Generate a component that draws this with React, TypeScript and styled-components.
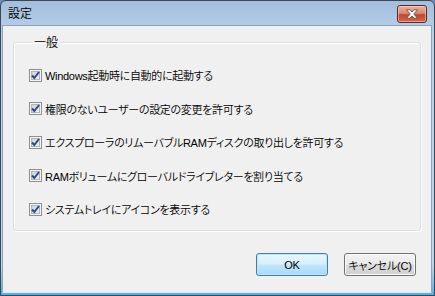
import React from 'react';
import styled, { createGlobalStyle } from 'styled-components';

const GlobalStyle = createGlobalStyle`
	html, body {
		margin: 0;
		padding: 0;
		overflow: hidden;
		background: #6d8fb5;
	}
	body {
		font-family: "Liberation Sans", "Noto Sans CJK JP", sans-serif;
	}
`;

const Window = styled.div`
	width: 435px;
	height: 296px;
	box-sizing: border-box;
	display: flex;
	flex-direction: column;
	border: 1px solid #3b4756;
	border-radius: 6px 6px 0 0;
	background: linear-gradient(to bottom, #a3bfdc 0%, #b9d1ea 12%, #bcd4ec 90%, #4bb4e4 100%);
	padding: 0 2px 2px 1px;
	overflow: hidden;
`;

const TitleBar = styled.div`
	height: 24px;
	flex: 0 0 24px;
	display: flex;
	align-items: center;
	justify-content: space-between;
	padding: 0 5px 0 6px;
`;

const Title = styled.span`
	font-family: "Noto Sans CJK JP", sans-serif;
	font-size: 12px;
	font-weight: 350;
	color: #000;
	line-height: 14px;
`;

const CloseButton = styled.div`
	width: 30px;
	height: 18px;
	box-sizing: border-box;
	border: 1px solid #5e2a20;
	border-radius: 3px;
	background: linear-gradient(to bottom, #eab2a2 0%, #d98a74 45%, #c4472a 55%, #cf6a4e 100%);
	box-shadow: inset 0 0 0 1px rgba(255, 220, 210, 0.5);
	display: flex;
	align-items: center;
	justify-content: center;
	margin-top: 1px;
`;

const Client = styled.div`
	flex: 1;
	background: #f0f0f0;
	border: 1px solid #8aa3bf;
	border-bottom-color: #d9e6f2;
	padding: 8px 10px 16px 10px;
	display: flex;
	flex-direction: column;
`;

const Group = styled.fieldset`
	margin: 0;
	border: 1px solid #d5dfe5;
	border-radius: 3px;
	box-shadow: inset 1px 1px 0 #ffffff, 1px 1px 0 #ffffff;
	padding: 17px 15px 13px 15px;
	display: flex;
	flex-direction: column;
	gap: 17.5px;
`;

const Legend = styled.legend`
	font-family: "Noto Sans CJK JP", sans-serif;
	font-size: 12px;
	font-weight: 350;
	line-height: 16px;
	color: #000;
	padding: 0 2px;
	margin-left: 3px;
`;

const Row = styled.label`
	display: flex;
	align-items: center;
	gap: 3px;
	height: 16px;
	font-size: 11px;
	font-weight: 350;
	letter-spacing: -0.3px;
	color: #000;
	font-feature-settings: 'palt';
	white-space: nowrap;
`;

const Box = styled.span`
	width: 13px;
	height: 13px;
	box-sizing: border-box;
	border: 1px solid #8e8f8f;
	background: #f4f4f4;
	display: flex;
	align-items: center;
	justify-content: center;
	flex: 0 0 13px;
`;

const BoxInner = styled.span`
	width: 9px;
	height: 9px;
	box-sizing: border-box;
	border: 1px solid #b0b6bd;
	background: linear-gradient(135deg, #cfd3d8 0%, #eef0f2 100%);
	position: relative;
	display: flex;
	align-items: center;
	justify-content: center;
`;

const ButtonRow = styled.div`
	margin-top: auto;
	display: flex;
	justify-content: flex-end;
	gap: 16px;
	padding-right: 5px;
`;

const Button = styled.button<{ $primary?: boolean }>`
	width: 72px;
	height: 23px;
	box-sizing: border-box;
	border-radius: 3px;
	font-family: "Liberation Sans", "Noto Sans CJK JP", sans-serif;
	font-size: 11px;
	font-weight: 350;
	letter-spacing: -0.2px;
	font-feature-settings: 'palt';
	color: #000;
	padding: 0;
	border: 1px solid ${(p) => (p.$primary ? '#3c7fb1' : '#707070')};
	background: ${(p) =>
		p.$primary
			? 'linear-gradient(to bottom, #eaf6fd 0%, #d9f0fc 45%, #bee6fd 55%, #a7d9f5 100%)'
			: 'linear-gradient(to bottom, #f2f2f2 0%, #ebebeb 45%, #dddddd 55%, #cfcfcf 100%)'};
	box-shadow: inset 0 0 0 1px ${(p) => (p.$primary ? '#bfe4f8' : '#fcfcfc')};
`;

const options = [
	'Windows起動時に自動的に起動する',
	'権限のないユーザーの設定の変更を許可する',
	'エクスプローラのリムーバブルRAMディスクの取り出しを許可する',
	'RAMボリュームにグローバルドライブレターを割り当てる',
	'システムトレイにアイコンを表示する',
];

function Check() {
	return (
		<Box>
			<BoxInner>
				<svg width="11" height="11" viewBox="0 0 11 11" style={{ position: 'absolute', left: -2, top: -2 }}>
					<path d="M2 5.5 L4.3 8 L9 2" fill="none" stroke="#2b4a8a" strokeWidth="2" />
				</svg>
			</BoxInner>
		</Box>
	);
}

export default function App() {
	return (
		<>
			<GlobalStyle />
			<Window>
				<TitleBar>
					<Title>設定</Title>
					<CloseButton>
						<svg width="14" height="10" viewBox="0 0 14 10">
							<path
								d="M1.5 0.8 L5 0.8 L7 3 L9 0.8 L12.5 0.8 L8.8 5 L12.5 9.2 L9 9.2 L7 7 L5 9.2 L1.5 9.2 L5.2 5 Z"
								fill="#ffffff"
								stroke="#6a3a30"
								strokeWidth="0.8"
							/>
						</svg>
					</CloseButton>
				</TitleBar>
				<Client>
					<Group>
						<Legend>一般</Legend>
						{options.map((o) => (
							<Row key={o}>
								<Check />
								<span>{o}</span>
							</Row>
						))}
					</Group>
					<ButtonRow>
						<Button $primary>OK</Button>
						<Button>キャンセル(C)</Button>
					</ButtonRow>
				</Client>
			</Window>
		</>
	);
}
